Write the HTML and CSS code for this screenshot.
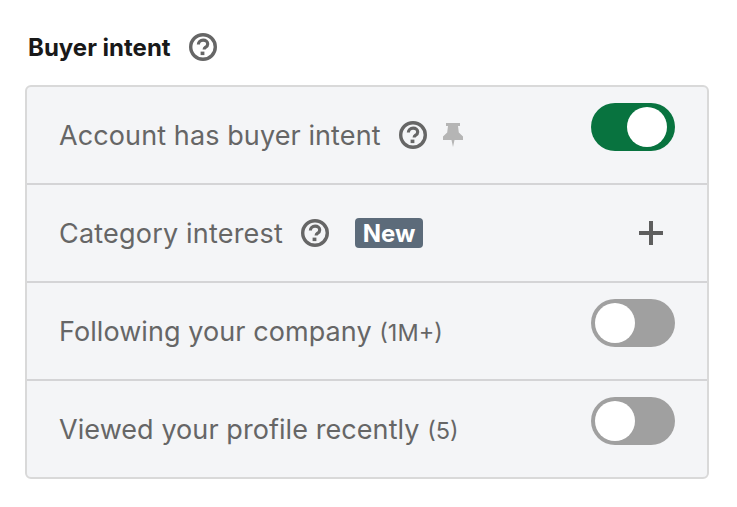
FILE: index.html
```html
<!DOCTYPE html>
<html lang="en">
<head>
<meta charset="utf-8">
<title>Buyer intent</title>
<link rel="stylesheet" href="styles.css">
</head>
<body>
<svg class="defs" width="0" height="0" aria-hidden="true">
  <symbol id="help" viewBox="0 0 28 28">
    <circle cx="14" cy="14" r="12.3" fill="none" stroke="currentColor" stroke-width="3.400"/>
    <path d="M9.400 11.500c0-2.700 2-4.300 4.700-4.300 2.700 0 4.600 1.500 4.600 3.700 0 1.800-1 2.700-2.300 3.500-.9.600-1.200 1-1.200 1.800v.4" fill="none" stroke="currentColor" stroke-width="3.200"/>
    <rect x="11.600" y="18.600" width="3.800" height="3.500" fill="currentColor"/>
  </symbol>
</svg>
<main class="panel">
  <h2 class="title">Buyer intent<svg class="help title-help"><use href="#help"/></svg></h2>
  <ul class="card">
    <li class="row">
      <span class="label">Account has buyer intent</span>
      <svg class="help"><use href="#help"/></svg>
      <svg class="pin" viewBox="0 0 20 24"><path d="M3 0h14v3h-2l.8 6.500L20 13.500V17h-8.500L10 24l-1.500-7H0v-3.500l4.200-4L5 3H3z"/></svg>
      <span class="toggle on"><span class="knob"></span></span>
    </li>
    <li class="row">
      <span class="label label-wide">Category interest</span>
      <svg class="help"><use href="#help"/></svg>
      <span class="badge">New</span>
      <svg class="plus" viewBox="0 0 24 24"><path d="M10 0h4v10h10v4H14v10h-4V14H0v-4h10z"/></svg>
    </li>
    <li class="row">
      <span class="label label-tight">Following your company <small class="count">(1M+)</small></span>
      <span class="toggle"><span class="knob"></span></span>
    </li>
    <li class="row">
      <span class="label label-tight">Viewed your profile recently <small class="count">(5)</small></span>
      <span class="toggle"><span class="knob"></span></span>
    </li>
  </ul>
</main>
</body>
</html>
```

FILE: styles.css
```css
* { box-sizing: border-box; }
html, body { margin: 0; background: #fff; }
body { font-family: Inter, "Liberation Sans", sans-serif; width: 737px; height: 507px; overflow: hidden; }
.defs { position: absolute; }
.panel { padding: 31px 28px 0 25px; }
.title {
  margin: 0 0 22px 3px;
  height: 32px;
  display: flex;
  align-items: center;
  font-size: 24px;
  font-weight: 700;
  color: #191919;
  white-space: nowrap;
}
.help { width: 28px; height: 28px; color: #666; flex: none; margin-left: 18px; }
.card {
  list-style: none;
  margin: 0;
  padding: 0;
  border: 2px solid #d9d9d9;
  border-radius: 6px;
  background: #f4f5f7;
  height: 394px;
}
.row {
  height: 98px;
  padding: 0 32px;
  display: flex;
  align-items: center;
  border-bottom: 2px solid #d4d4d6;
}
.row:last-child { height: 96px; border-bottom: 0; }
.label { font-size: 27px; letter-spacing: .1px; color: #666; white-space: nowrap; }
.label-wide { letter-spacing: .2px; }
.label-tight { letter-spacing: .07px; }
.count { font-size: 23.5px; letter-spacing: 0; }
.pin { width: 20px; height: 24px; fill: #b5b5b5; margin-left: 16px; flex: none; }
.badge {
  margin-left: 26px;
  height: 30px;
  width: 68px;
  background: #5c6b7a;
  color: #fff;
  border-radius: 4px;
  font-size: 24px;
  font-weight: 700;
  line-height: 31px;
  text-align: center;
}
.plus { width: 24px; height: 24px; fill: #5e5e5e; margin-left: auto; margin-right: 12px; }
.toggle {
  margin-left: auto;
  width: 84px;
  height: 48px;
  border-radius: 24px;
  background: #a0a0a0;
  padding: 4px;
  display: flex;
  margin-top: -16px;
  flex: none;
}
.toggle.on { background: #08733f; justify-content: flex-end; padding-right: 8px; }
.knob { width: 40px; height: 40px; border-radius: 50%; background: #fff; }
```
